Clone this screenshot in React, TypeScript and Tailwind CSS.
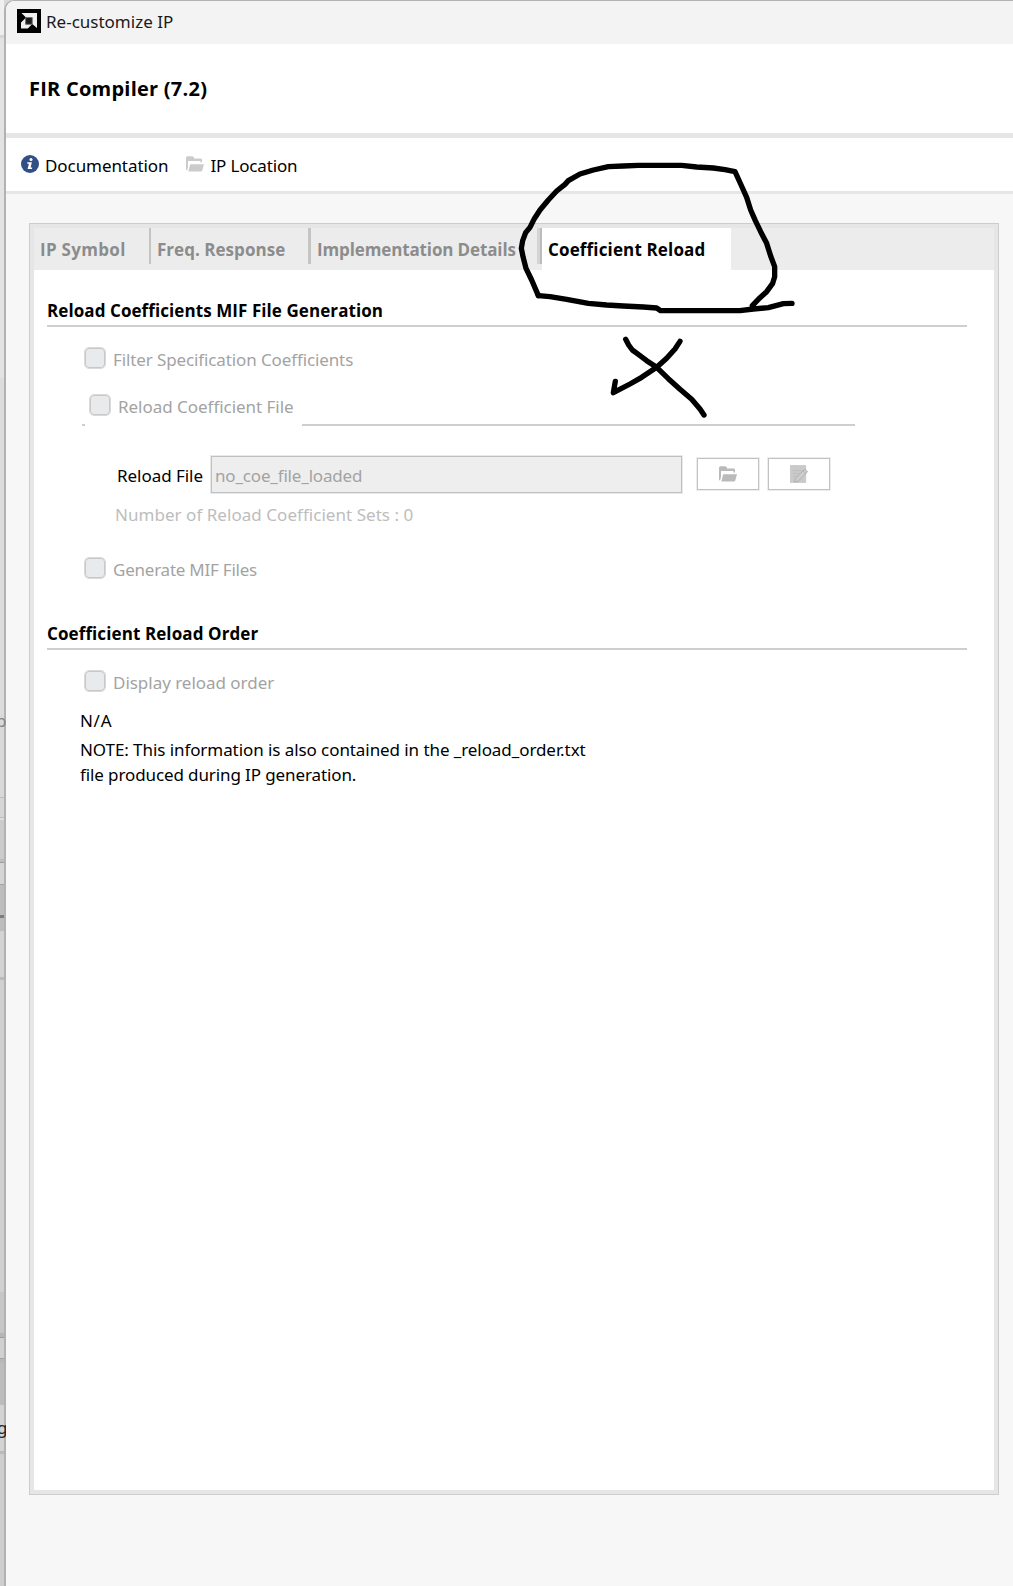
import type { ReactNode } from "react";

const sliceRows = [
  "h-[35px] bg-[#efefef]",
  "h-[3px] bg-[#d6d6d6]",
  "h-[340px] bg-[#e3e3e3]",
  "h-[337px] bg-[#dcdcdc]",
  "h-[82px] bg-[#d9d9d9]",
  "h-[1px] bg-[#bebebe]",
  "h-[19px] bg-[#d6d6d6]",
  "h-[1px] bg-[#bebebe]",
  "h-[2px] bg-[#dddddd]",
  "h-[39px] bg-[#cbcbcb]",
  "h-[3px] bg-[#bdbdbd]",
  "h-[1px] bg-[#9c9c9c]",
  "h-[21px] bg-[#d5d5d5]",
  "h-[1px] bg-[#a4a4a4]",
  "h-[30px] bg-[#bdbdbd]",
  "h-[3px] bg-[#7c7c7c]",
  "h-[13px] bg-[#bcbcbc]",
  "h-[46px] bg-[#d3d3d3]",
  "h-[3px] bg-[#bababa]",
  "h-[312px] bg-[#d0d0d0]",
  "h-[41px] bg-[#c6c6c6]",
  "h-[4px] bg-[#b6b6b6]",
  "h-[1px] bg-[#9c9c9c]",
  "h-[20px] bg-[#d0d0d0]",
  "h-[1px] bg-[#a4a4a4]",
  "h-[4px] bg-[#b8b8b8]",
  "h-[42px] bg-[#bcbcbc]",
  "h-[46px] bg-[#d3d3d3]",
  "h-[3px] bg-[#bababa]",
  "h-[132px] bg-[#cecece]",
];

function BackgroundSlice() {
  return (
    <aside className="relative z-10 -mr-[2px] w-[6px] shrink-0 overflow-hidden">
      {sliceRows.map((row, i) => (
        <div key={i} className={`w-1 ${row}`} />
      ))}
      <span className="absolute top-[708px] -left-[4px] text-[#858585]">p</span>
      <span className="absolute top-[1415px] -left-[3px] text-[#222]">g</span>
    </aside>
  );
}

function AmdLogo() {
  return (
    <svg width="24" height="24" viewBox="0 0 24 24">
      <path d="M0 0H24V24H0Z" fill="#000" />
      <path d="M4.500 4H20V19L15.200 15V8.500H9Z" fill="#f0f0f0" />
      <path d="M8.600 9V15.300H15L10.800 19.600H4V13.500Z" fill="#f0f0f0" />
      <path d="M8.600 8.500H15.200V15.300H8.600Z" fill="#1a1a1a" stroke="#777" strokeWidth=".8" />
    </svg>
  );
}

function InfoIcon() {
  return (
    <svg width="18" height="18" viewBox="0 0 18 18">
      <circle cx="9" cy="9" r="9" fill="#304f86" />
      <circle cx="10" cy="4.600" r="1.500" fill="#fff" />
      <path d="M6.300 7.300H10.900L9.600 12.400H11.200L11 13.900H6.600L7.900 8.800H6.300Z" fill="#fff" />
    </svg>
  );
}

function FolderIcon({ className }: { className: string }) {
  return (
    <svg className={className} width="18" height="16" viewBox="0 0 18 16" fill="currentColor">
      <path d="M0 1.500L1 .300H6.500L8 1.500V2.500H15L16 3.500V6.500H14.500V5H2V11L1 14.800L0 13.800Z" />
      <path d="M4.200 8.300H18L16.200 14.700L15.300 15.500H2.400Z" />
    </svg>
  );
}

function EditIcon() {
  return (
    <svg width="18" height="18" viewBox="0 0 18 18" fill="none">
      <path d="M.3.3H15.700V17.700H.3Z" fill="#cacaca" stroke="#bdbdbd" strokeWidth=".6" />
      <path d="M3 5.500H12M3 8.500H9.500M3 11.500H6.500" stroke="#bababa" strokeWidth=".7" />
      <path d="M4.500 16.800L5.300 13.500L14.800 4L17.600 6.800L8 16.300Z" fill="#cdcdcd" stroke="#adadad" strokeWidth=".9" />
      <path d="M13 5.800L15.800 8.600" stroke="#adadad" strokeWidth=".9" />
    </svg>
  );
}

function Checkbox() {
  return (
    <span className="h-[22px] w-[22px] shrink-0 rounded-[5px] border border-[#dadada]">
      <span className="block h-full w-full rounded-[4px] border border-[#c8c8c8] bg-[#e9eaec]" />
    </span>
  );
}

function CheckRow({ className, children }: { className: string; children: ReactNode }) {
  return (
    <label className={`flex h-[22px] items-center text-[#a3a3a3] ${className}`}>
      <Checkbox />
      {children}
    </label>
  );
}

function Section({ className, children }: { className: string; children: ReactNode }) {
  return (
    <h2
      className={`mr-[27px] ml-[13px] border-b-2 border-[#cecece] font-['Open_Sans',sans-serif] leading-[29px] font-bold text-black ${className}`}
    >
      {children}
    </h2>
  );
}

function IconButton({ className, children }: { className: string; children: ReactNode }) {
  return (
    <button
      className={`flex h-[32px] w-[62px] items-center justify-center border border-[#c2c2c2] bg-white shadow-[0_0_0_1px_#ededed] ${className}`}
    >
      {children}
    </button>
  );
}

function InkMarkup() {
  return (
    <svg
      className="pointer-events-none absolute top-[150px] left-[500px]"
      width="320"
      height="280"
      viewBox="0 0 960 840"
      fill="none"
      stroke="#000"
      strokeWidth="16"
      strokeLinecap="round"
      strokeLinejoin="round"
    >
      <path d="M115 437L95 390L78 355L69 320L64 295L68 272L77 248L90 232L103 206L120 180L145 150L170 123L195 103L205 92L240 72L280 60L325 50L370 48L415 46H545L590 51L640 54L675 59L705 65L722 102L740 142L752 180L766 212L782 245L800 280L812 318L824 350V380L818 400L800 425L780 443L757 467" />
      <path d="M115 437L150 440L200 448L265 460L320 465L370 468L430 471L470 474L482 482H720L760 477L805 473L850 461L876 460" />
      <path d="M377 568L386 585L397 600L412 611L440 632L470 652L505 686L540 718L575 748L600 777L612 795" />
      <path d="M540 574L525 597L500 625L470 652L425 682L390 702L340 728L346 694" />
    </svg>
  );
}

export default function App() {
  return (
    <div className="relative flex h-[1586px] w-full overflow-hidden bg-[#d9d9d9] font-['Noto_Sans',sans-serif] text-[17px] leading-[25px] whitespace-nowrap text-black">
      <BackgroundSlice />

      <main className="flex min-w-0 flex-1 flex-col overflow-hidden rounded-tl-[10px] border-t border-l-2 border-[#b2b2b2] bg-[#f7f7f7]">
        <header className="flex h-[43px] shrink-0 items-center bg-[#f3f3f3] pl-[11px]">
          <span className="mb-[3px]">
            <AmdLogo />
          </span>
          <span className="mb-[3px] ml-[5px] text-[#1a1a1a]">Re-customize IP</span>
        </header>

        <div className="flex h-[94px] shrink-0 items-center border-b-[5px] border-[#e6e6e6] bg-white pl-[23px]">
          <h1 className="font-['Open_Sans',sans-serif] text-[20px] font-bold tracking-[0.24px]">FIR Compiler (7.2)</h1>
        </div>

        <nav className="flex h-[56px] shrink-0 items-center border-b-[3px] border-[#e6e6e6] bg-white pl-[15px]">
          <span className="mb-px">
            <InfoIcon />
          </span>
          <span className="mt-[2px] ml-[6px] tracking-[-0.07px]">Documentation</span>
          <FolderIcon className="mb-px ml-[18px] text-[#cbcbcb]" />
          <span className="mt-[2px] ml-[6px] tracking-[-0.15px]">IP Location</span>
        </nav>

        <section className="mt-[29px] mr-[14px] ml-[23px] flex h-[1272px] shrink-0 flex-col border border-[#cdcdcd] bg-[#e6e6e6] p-[4px]">
          <div className="flex h-[42px] shrink-0 bg-[#ececec] font-['Open_Sans',sans-serif] font-bold text-[#8c8c8c]">
            <div className="h-[36px] w-[117px] border-r-2 border-[#c4c4c4] pl-[6px] leading-[43px] tracking-[0.3px]">
              IP Symbol
            </div>
            <div className="h-[36px] w-[160px] border-r-[3px] border-[#c4c4c4] pl-[6px] leading-[43px] tracking-[0.03px]">
              Freq. Response
            </div>
            <div className="flex h-[36px] w-[231px] justify-between border-r-2 border-[#bcbcbc] pl-[6px] leading-[43px] tracking-[-0.13px]">
              Implementation Details
              <span className="w-[3px] bg-[#d4d4d4]" />
            </div>
            <div className="w-[189px] bg-white pl-[6px] leading-[43px] tracking-[0.15px] text-black">
              Coefficient Reload
            </div>
          </div>

          <div className="flex-1 bg-white">
            <Section className="mt-[26px] tracking-[0.08px]">Reload Coefficients MIF File Generation</Section>

            <CheckRow className="mt-[20px] ml-[50px]">
              <span className="mt-[3px] ml-[7px] leading-[19px] tracking-[-0.115px]">
                Filter Specification Coefficients
              </span>
            </CheckRow>
            <CheckRow className="mt-[25px] ml-[55px]">
              <span className="mt-[3px] ml-[7px] leading-[19px] tracking-[-0.03px]">Reload Coefficient File</span>
            </CheckRow>
            <div className="mt-[8px] ml-[48px] flex h-[2px] w-[773px] justify-between">
              <span className="w-[3px] bg-[#cecece]" />
              <span className="w-[553px] bg-[#cecece]" />
            </div>

            <div className="mt-[29px] flex h-[38px] items-center pl-[83px]">
              <span className="mt-[2px] w-[94px] tracking-[-0.04px]">Reload File</span>
              <div className="mt-px flex h-[37px] w-[471px] items-center border border-[#c0c0c0] bg-[#eeeeee] pl-[3px] text-[#a3a3a3] shadow-[0_0_0_1px_#e9e9e9]">
                <span className="mt-px tracking-[-0.17px]">no_coe_file_loaded</span>
              </div>
              <IconButton className="ml-[15px]">
                <FolderIcon className="mr-[1px] text-[#bababa]" />
              </IconButton>
              <IconButton className="ml-[9px]">
                <EditIcon />
              </IconButton>
            </div>
            <p className="mt-[9px] ml-[81px] tracking-[0.04px] text-[#bdbdbd]">
              Number of Reload Coefficient Sets : 0
            </p>

            <CheckRow className="mt-[30px] ml-[50px]">
              <span className="mt-[3px] ml-[7px] leading-[19px] tracking-[-0.23px]">Generate MIF Files</span>
            </CheckRow>

            <Section className="mt-[40px] tracking-[0.1px]">Coefficient Reload Order</Section>

            <CheckRow className="mt-[20px] ml-[50px]">
              <span className="mt-[3px] ml-[7px] leading-[19px] tracking-[-0.03px]">Display reload order</span>
            </CheckRow>

            <p className="mt-[16px] ml-[46px] tracking-[0.7px]">N/A</p>
            <p className="mt-[4px] ml-[46px]">
              <span className="tracking-[-0.075px]">
                NOTE: This information is also contained in the _reload_order.txt
              </span>
              <br />
              <span className="tracking-[-0.11px]">file produced during IP generation.</span>
            </p>
          </div>
        </section>
      </main>

      <InkMarkup />
    </div>
  );
}
